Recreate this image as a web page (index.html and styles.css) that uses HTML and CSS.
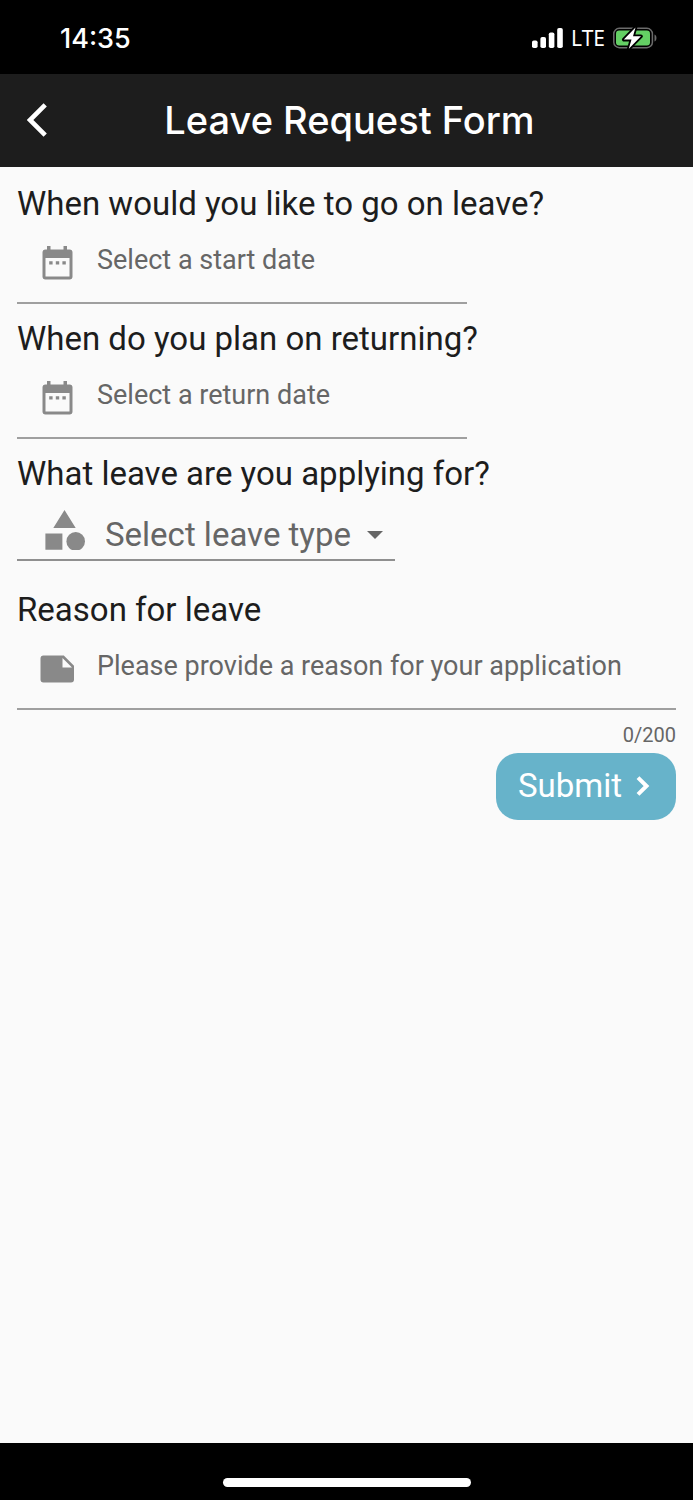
FILE: index.html
```html
<!DOCTYPE html>
<html lang="en">
<head>
<meta charset="utf-8">
<meta name="viewport" content="width=device-width, initial-scale=1">
<title>Leave Request Form</title>
<link rel="stylesheet" href="styles.css">
</head>
<body>
<div class="status-bar">
  <time class="clock">14:35</time>
  <div class="indicators">
    <svg class="signal" viewBox="0 0 31 20" aria-hidden="true">
      <rect x="0" y="12.500" width="5.600" height="7.500" rx="1.800"/>
      <rect x="8.400" y="9" width="5.600" height="11" rx="1.800"/>
      <rect x="16.800" y="4.500" width="5.600" height="15.500" rx="1.800"/>
      <rect x="25.200" y="0" width="5.600" height="20" rx="1.800"/>
    </svg>
    <span class="network">LTE</span>
    <svg class="battery" viewBox="0 0 44 24" aria-hidden="true">
      <rect x="0.8" y="2.3" width="38.6" height="19.4" rx="5.5" fill="none" stroke="#6b6b6b" stroke-width="1.5"/>
      <path d="M41.5 8.5c2.6.8 2.6 6.200 0 7z" fill="#6b6b6b"/>
      <rect x="3" y="4.600" width="34" height="14.800" rx="3.200" fill="#64cf64"/>
      <path d="M22.500 1.500 10.800 13.600h7.700l-2.700 9.200 12.200-12.500h-8z" fill="#fff" stroke="#000" stroke-width="3.600" stroke-linejoin="round" paint-order="stroke"/>
    </svg>
  </div>
</div>
<header class="app-bar">
  <button class="back" type="button" aria-label="Back">
    <svg viewBox="0 0 20 34" aria-hidden="true"><path d="M18.200 1.800 3 17l15.200 15.200" fill="none" stroke="#fff" stroke-width="4.600"/></svg>
  </button>
  <h1 class="title">Leave Request Form</h1>
</header>
<main class="content">
  <form class="form">
    <div class="group">
      <label class="question" for="start">When would you like to go on leave?</label>
      <div class="field field-date">
        <svg class="icon" viewBox="0 0 40 40" aria-hidden="true"><path fill-rule="evenodd" d="M10 3h3.500v3.500h13V3H30v3.500h2.500A3 3 0 0 1 35.500 9.500v24a3 3 0 0 1-3 3h-24a3 3 0 0 1-3-3v-24a3 3 0 0 1 3-3H10zM8.500 15v18.500h24V15z"/><path d="M12.200 18.200h3.400v3.400h-3.400zM18.800 18.200h3.400v3.400h-3.400zM25.400 18.200h3.400v3.400h-3.400z"/></svg>
        <input class="input" id="start" type="text" placeholder="Select a start date">
      </div>
    </div>
    <div class="group">
      <label class="question" for="return">When do you plan on returning?</label>
      <div class="field field-date">
        <svg class="icon" viewBox="0 0 40 40" aria-hidden="true"><path fill-rule="evenodd" d="M10 3h3.500v3.500h13V3H30v3.500h2.500A3 3 0 0 1 35.500 9.500v24a3 3 0 0 1-3 3h-24a3 3 0 0 1-3-3v-24a3 3 0 0 1 3-3H10zM8.500 15v18.500h24V15z"/><path d="M12.200 18.200h3.400v3.400h-3.400zM18.800 18.200h3.400v3.400h-3.400zM25.400 18.200h3.400v3.400h-3.400z"/></svg>
        <input class="input" id="return" type="text" placeholder="Select a return date">
      </div>
    </div>
    <div class="group group-type">
      <label class="question" for="type">What leave are you applying for?</label>
      <div class="field-select">
        <svg class="icon" viewBox="0 0 40 40" aria-hidden="true"><path d="M19.500 0 30.700 18h-22.400zM.4 23.500h17v16.300H.4z"/><circle cx="30.700" cy="31.400" r="9.300"/></svg>
        <select class="select" id="type">
          <option>Select leave type</option>
        </select>
        <svg class="caret" viewBox="0 0 16 8" aria-hidden="true"><path d="M0 0h16L8 8z"/></svg>
      </div>
    </div>
    <div class="group">
      <label class="question" for="reason">Reason for leave</label>
      <div class="field">
        <svg class="icon" viewBox="0 0 40 40" aria-hidden="true"><path fill-rule="evenodd" d="M6.500 6.500h20.300L37 16.700v13.800a3 3 0 0 1-3 3H6.500a3 3 0 0 1-3-3v-21a3 3 0 0 1 3-3zM25.500 9v9.500H35z"/></svg>
        <input class="input" id="reason" type="text" maxlength="200" placeholder="Please provide a reason for your application">
      </div>
      <div class="counter">0/200</div>
    </div>
    <button class="submit" type="submit">Submit
      <svg viewBox="0 0 14 20" aria-hidden="true"><path d="M2 1.600 10.500 10 2 18.400" fill="none" stroke="#fff" stroke-width="4"/></svg>
    </button>
  </form>
</main>
<footer class="home-area"><div class="home-indicator"></div></footer>
</body>
</html>
```

FILE: styles.css
```css
* {
  box-sizing: border-box;
}

body {
  margin: 0;
  min-height: 100vh;
  display: flex;
  flex-direction: column;
  background: #fafafa;
  color: #1d1d1d;
  font-family: Roboto, sans-serif;
}

.status-bar {
  display: flex;
  justify-content: space-between;
  align-items: center;
  padding: 20px 36px 18px 60px;
  background: #000;
  color: #fff;
  font-family: Inter, sans-serif;
}

.clock {
  padding-top: 2px;
  font-size: 27px;
  line-height: 34px;
  font-weight: 500;
}

.indicators {
  display: flex;
  align-items: center;
  gap: 8px;
}

.signal {
  width: 31px;
  height: 20px;
  fill: #fff;
}

.network {
  font-family: "Noto Sans", sans-serif;
  font-size: 21px;
  line-height: 28px;
}

.battery {
  width: 44px;
  height: 24px;
}

.app-bar {
  display: grid;
  grid-template-columns: 94px 1fr 94px;
  align-items: center;
  padding: 21px 0 22px;
  background: #1d1d1d;
  color: #fff;
}

.back {
  display: flex;
  padding: 0 0 0 27px;
  border: 0;
  background: none;
}

.back svg {
  width: 20px;
  height: 34px;
}

.title {
  margin: 0;
  padding-left: 6px;
  font-family: Inter, sans-serif;
  font-size: 38px;
  line-height: 50px;
  font-weight: 500;
  text-align: center;
}

.content {
  flex: 1;
  padding: 17px;
}

.form {
  display: flex;
  flex-direction: column;
  gap: 15px;
}

.group {
  display: flex;
  flex-direction: column;
}

.group-type {
  padding-bottom: 14px;
}

.question {
  font-size: 33px;
  line-height: 40px;
}

.field {
  display: flex;
  align-items: center;
  padding-left: 20px;
  border-bottom: 2px solid #9f9f9f;
}

.field-date {
  width: 450px;
  max-width: 100%;
}

.icon {
  flex: none;
  width: 40px;
  height: 40px;
  fill: #898989;
}

.input {
  flex: 1;
  min-width: 0;
  height: 78px;
  padding: 0 0 7px 20px;
  border: 0;
  outline: 0;
  background: none;
  color: #1d1d1d;
  font-family: Roboto, sans-serif;
  font-size: 27px;
}

.input::placeholder {
  color: #666;
  opacity: 1;
}

.field-select {
  display: grid;
  grid-template-columns: 40px 1fr;
  align-items: center;
  width: 378px;
  max-width: 100%;
  padding: 9px 12px 2px 28px;
  border-bottom: 2px solid #8f8f8f;
}

.select {
  grid-area: 1 / 2;
  height: 54px;
  padding: 8px 20px 0 20px;
  border: 0;
  outline: 0;
  appearance: none;
  background: none;
  color: #666;
  font-family: Roboto, sans-serif;
  font-size: 33px;
}

.caret {
  grid-area: 1 / 2;
  justify-self: end;
  width: 16px;
  height: 8px;
  margin-top: 10px;
  fill: #666;
  pointer-events: none;
}

.counter {
  padding-top: 13px;
  color: #666;
  font-size: 20px;
  line-height: 24px;
  text-align: right;
}

.submit {
  display: flex;
  align-items: center;
  align-self: flex-end;
  gap: 14px;
  margin-top: -9px;
  padding: 13px 26px 14px 22px;
  border: 0;
  border-radius: 22px;
  background: #67b3ca;
  color: #fff;
  font-family: Roboto, sans-serif;
  font-size: 33px;
  line-height: 40px;
}

.submit svg {
  width: 14px;
  height: 20px;
}

.home-area {
  display: flex;
  justify-content: center;
  padding: 35px 0 13px;
  background: #000;
}

.home-indicator {
  width: 248px;
  height: 9px;
  border-radius: 5px;
  background: #fff;
}
```
